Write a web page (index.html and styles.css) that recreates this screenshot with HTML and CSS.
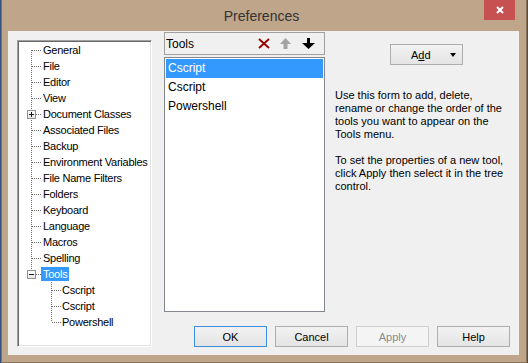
FILE: index.html
```html
<!DOCTYPE html>
<html>
<head lang="en">
    <meta charset="UTF-8">
    <title>Preferences</title>

    <link rel="stylesheet" href="styles.css">

</head>
<body>

    <div class="window">
        <!-- title bar -->
        <div class="titlebar">
            <span class="title">Preferences</span>
            <span class="close">
                <svg width="8" height="8" viewBox="0 0 8 8"><path d="M1 1L7 7M7 1L1 7" stroke="#fff" stroke-width="2"/></svg>
            </span>
        </div>

        <div class="client">
            <!-- left tree -->
            <div class="tree">
                <ul>
                    <li class="node first"><span class="slot"></span><span class="label">General</span></li>
                    <li class="node"><span class="slot"></span><span class="label">File</span></li>
                    <li class="node"><span class="slot"></span><span class="label">Editor</span></li>
                    <li class="node"><span class="slot"></span><span class="label">View</span></li>
                    <li class="node"><span class="slot"><span class="expander">
                        <svg width="9" height="9" viewBox="0 0 9 9"><path d="M2 4.5H7M4.5 2V7" stroke="#1a1a1a"/></svg>
                    </span></span><span class="label">Document Classes</span></li>
                    <li class="node"><span class="slot"></span><span class="label">Associated Files</span></li>
                    <li class="node"><span class="slot"></span><span class="label">Backup</span></li>
                    <li class="node"><span class="slot"></span><span class="label">Environment Variables</span></li>
                    <li class="node"><span class="slot"></span><span class="label">File Name Filters</span></li>
                    <li class="node"><span class="slot"></span><span class="label">Folders</span></li>
                    <li class="node"><span class="slot"></span><span class="label">Keyboard</span></li>
                    <li class="node"><span class="slot"></span><span class="label">Language</span></li>
                    <li class="node"><span class="slot"></span><span class="label">Macros</span></li>
                    <li class="node"><span class="slot"></span><span class="label">Spelling</span></li>
                    <li class="node last"><span class="slot"><span class="expander">
                        <svg width="9" height="9" viewBox="0 0 9 9"><path d="M2 4.5H7" stroke="#1a1a1a"/></svg>
                    </span></span><span class="label selected">Tools</span></li>
                    <li class="node child first"><span class="slot"></span><span class="label">Cscript</span></li>
                    <li class="node child"><span class="slot"></span><span class="label">Cscript</span></li>
                    <li class="node child last"><span class="slot"></span><span class="label">Powershell</span></li>
                </ul>
            </div>

            <div class="main">
                <div class="top">
                    <!-- tools list -->
                    <div class="tools">
                        <div class="tools-head">
                            <span>Tools</span>
                            <svg class="ico-del" width="12" height="11" viewBox="0 0 12 11"><path d="M1 1L11 10M11 1L1 10" stroke="#9a0000" stroke-width="1.9"/></svg>
                            <svg class="ico-up" width="11" height="11" viewBox="0 0 11 11"><path d="M5.5 0L11 6H7.5V11H3.5V6H0Z" fill="#a3a3a3"/></svg>
                            <svg class="ico-down" width="13" height="11" viewBox="0 0 13 11"><path d="M5 0H8V5H13L6.5 11L0 5H5Z" fill="#000"/></svg>
                        </div>
                        <ul class="tools-list">
                            <li class="selected">Cscript</li>
                            <li>Cscript</li>
                            <li>Powershell</li>
                        </ul>
                    </div>

                    <!-- help text -->
                    <div class="side">
                        <div class="btn add"><span>A<u>d</u>d</span><span class="caret"></span></div>
                        <div class="note">
                            <p>Use this form to add, delete, rename or change the order of the tools you want to appear on the Tools menu.</p>
                            <p>To set the properties of a new tool, click Apply then select it in the tree control.</p>
                        </div>
                    </div>
                </div>

                <!-- dialog buttons -->
                <div class="buttons">
                    <div class="btn default">OK</div>
                    <div class="btn">Cancel</div>
                    <div class="btn disabled">Apply</div>
                    <div class="btn">Help</div>
                </div>
            </div>
        </div>
    </div>

</body>
</html>
```
FILE: styles.css
```css
*{
    margin: 0px;
    padding: 0px;
    box-sizing: border-box;
}

body{
    background: #34507e;
    font-family: "Liberation Sans", Arial, sans-serif;
    font-size: 11px;
    color: #000;
}

ul{
    list-style: none;
}

.window{
    margin-left: 1px;
    width: 526px;
    height: 363px;
    background: #bfa58a;
    border: 1px solid #85725f;
    border-top: 0;
    padding: 0 7px 7px 6px;
    display: flex;
    flex-direction: column;
}

.titlebar{
    position: relative;
    height: 31px;
    flex: none;
    display: flex;
    align-items: center;
    justify-content: center;
    padding-right: 4px;
}

.title{
    font-size: 14px;
    color: #333;
}

.close{
    position: absolute;
    top: 0;
    right: 4px;
    width: 31px;
    height: 20px;
    background: #c75050;
    display: flex;
    align-items: center;
    justify-content: center;
}

.client{
    flex: 1;
    background: #f0f0f0;
    display: flex;
}

/* tree control */
.tree{
    width: 135px;
    margin: 9px 0 8px 9px;
    padding: 1px;
    background: #fff;
    border: 1px solid;
    border-color: #a0a0a0 #fff #fff #a0a0a0;
    box-shadow: inset 1px 1px 0 #696969, inset -1px -1px 0 #e3e3e3;
    letter-spacing: -0.25px;
}

.node{
    height: 16px;
    display: flex;
    align-items: center;
    white-space: nowrap;
    background-image:
        repeating-linear-gradient(to right, #6e6e6e 0 1px, transparent 1px 2px),
        repeating-linear-gradient(to bottom, #6e6e6e 0 1px, transparent 1px 2px);
    background-repeat: no-repeat;
    background-size: 9px 1px, 1px 16px;
    background-position: 13px 8px, 12px 0;
}

.node.first{
    background-size: 9px 1px, 1px 8px;
    background-position: 13px 8px, 12px 8px;
}

.node.last{
    background-size: 9px 1px, 1px 8px;
    background-position: 13px 8px, 12px 0;
}

.node.child{
    background-position: 33px 8px, 32px 0;
}

.node.child.first{
    background-size: 9px 1px, 1px 16px;
}

.node .slot{
    width: 22px;
    flex: none;
    display: flex;
    align-items: center;
}

.node.child .slot{
    width: 41px;
}

.expander{
    margin-left: 8px;
    width: 9px;
    height: 9px;
    border: 1px solid #919191;
    background: linear-gradient(#fff, #e6e6e6);
    display: flex;
}

.expander svg{
    margin: -1px;
}

.label{
    height: 14px;
    line-height: 14px;
    padding: 0 2px;
}

.label.selected{
    background: #3399ff;
    color: #fff;
}

.main{
    flex: 1;
    margin-left: 12px;
    display: flex;
    flex-direction: column;
}

.top{
    display: flex;
    padding-top: 1px;
}

/* tools list */
.tools{
    width: 161px;
    flex: none;
}

.tools-head{
    height: 23px;
    border: 1px solid #a0a0a0;
    padding-left: 1px;
    display: flex;
    align-items: center;
    font-size: 12px;
}

.ico-del{
    margin-left: auto;
}

.ico-up{
    margin-left: 10px;
}

.ico-down{
    margin-left: 11px;
    margin-right: 9px;
}

.tools-list{
    margin-top: 2px;
    height: 255px;
    border: 1px solid #828790;
    background: #fff;
    padding: 1px;
    font-size: 12px;
}

.tools-list li{
    height: 19px;
    line-height: 19px;
    padding-left: 2px;
}

.tools-list li.selected{
    background: #3399ff;
    color: #fff;
}

.side{
    padding-left: 10px;
}

.btn{
    width: 73px;
    height: 21px;
    border: 1px solid #adadad;
    background: linear-gradient(#f2f2f2, #e4e4e4);
    display: flex;
    align-items: center;
    justify-content: center;
}

.add{
    margin: 12px 0 0 55px;
    justify-content: flex-start;
    padding: 0 5px 0 20px;
}

.add u{
    text-decoration: underline;
}

.caret{
    margin-left: auto;
    margin-right: 1px;
    width: 0;
    height: 0;
    border-left: 3.5px solid transparent;
    border-right: 3.5px solid transparent;
    border-top: 4px solid #000;
}

.note{
    margin-top: 24px;
    width: 174px;
    line-height: 13px;
}

.note p + p{
    margin-top: 13px;
}

/* bottom buttons */
.buttons{
    margin-top: auto;
    display: flex;
    justify-content: flex-end;
    gap: 8px;
    padding: 0 9px 8px 0;
}

.btn.default{
    border-color: #3c8ee0;
}

.btn.disabled{
    border-color: #cfcfcf;
    background: #f4f4f4;
    color: #8a8a8a;
}
```
